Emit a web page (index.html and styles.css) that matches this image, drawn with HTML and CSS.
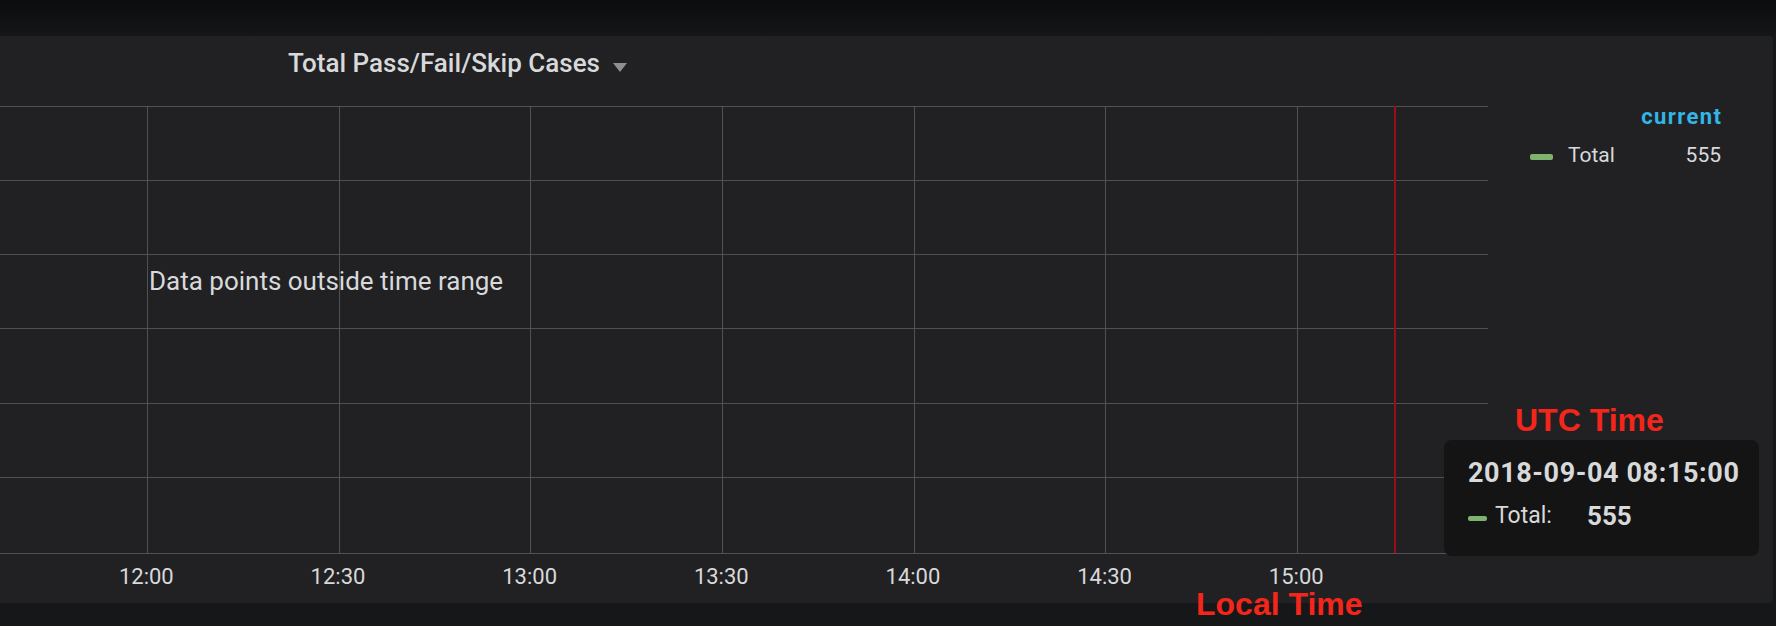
FILE: index.html
```html
<!DOCTYPE html>
<html lang="en">
<head>
    <meta charset="UTF-8">
    <title>Total Pass/Fail/Skip Cases</title>
    <link rel="stylesheet" href="styles.css">
</head>
<body>
    <div class="topbar"></div>
    <div class="panel">
        <div class="panel-header">
            <span class="panel-title">Total Pass/Fail/Skip Cases</span>
            <span class="caret"></span>
        </div>
        <div class="panel-body">
            <div class="graph">
                <div class="plot">
                    <svg class="grid" width="1488" height="448" viewBox="0 0 1488 448">
                        <g fill="#515154">
                            <rect x="0" y="0" width="1488" height="1"/>
                            <rect x="0" y="74" width="1488" height="1"/>
                            <rect x="0" y="148" width="1488" height="1"/>
                            <rect x="0" y="222" width="1488" height="1"/>
                            <rect x="0" y="297" width="1488" height="1"/>
                            <rect x="0" y="371" width="1488" height="1"/>
                            <rect x="0" y="447" width="1488" height="1"/>
                            <rect x="147" y="0" width="1" height="448"/>
                            <rect x="339" y="0" width="1" height="448"/>
                            <rect x="530" y="0" width="1" height="448"/>
                            <rect x="722" y="0" width="1" height="448"/>
                            <rect x="914" y="0" width="1" height="448"/>
                            <rect x="1105" y="0" width="1" height="448"/>
                            <rect x="1297" y="0" width="1" height="448"/>
                        </g>
                        <!-- hover marker -->
                        <rect x="1394" y="0" width="2" height="447" fill="#9a0e17"/>
                    </svg>
                    <div class="no-data">Data points outside time range</div>
                </div>
                <div class="x-axis">
                    <span>12:00</span>
                    <span>12:30</span>
                    <span>13:00</span>
                    <span>13:30</span>
                    <span>14:00</span>
                    <span>14:30</span>
                    <span>15:00</span>
                </div>
            </div>
            <div class="legend">
                <div class="legend-head">current</div>
                <div class="legend-row">
                    <i class="swatch"></i>
                    <span class="legend-name">Total</span>
                    <span class="legend-value">555</span>
                </div>
            </div>
        </div>

        <div class="tooltip">
            <div class="tooltip-time">2018-09-04 08:15:00</div>
            <div class="tooltip-row">
                <i class="tooltip-swatch"></i>
                <span class="tooltip-name">Total:</span>
                <span class="tooltip-value">555</span>
            </div>
        </div>

        <div class="note note-utc">UTC Time</div>
        <div class="note note-local">Local Time</div>
    </div>
</body>
</html>
```

FILE: styles.css
```css
body {
    margin: 0;
    height: 626px;
    overflow: hidden;
    background-color: #161719;
    font-family: Roboto, "Liberation Sans", sans-serif;
    color: #d8d9da;
}

.topbar {
    height: 36px;
    background: linear-gradient(to bottom, #0b0c0e, #151618);
}

.panel {
    position: relative;
    height: 567px;
    margin-right: 3px;
    background-color: #212124;
    border-radius: 0 4px 4px 0;
}

.panel-header {
    box-sizing: border-box;
    height: 70px;
    padding: 12px 0 0 288px;
    display: flex;
    align-items: flex-start;
}

.panel-title {
    font-size: 26px;
    font-weight: 500;
    line-height: 30px;
    color: #d8d9da;
}

.caret {
    width: 0;
    height: 0;
    margin: 15px 0 0 13px;
    border-left: 7px solid transparent;
    border-right: 7px solid transparent;
    border-top: 9px solid #8e8e90;
}

.panel-body {
    display: flex;
}

.graph {
    width: 1488px;
    flex-shrink: 0;
}

.plot {
    position: relative;
    height: 448px;
}

.grid {
    display: block;
    shape-rendering: crispEdges;
}

.no-data {
    position: absolute;
    left: 149px;
    top: 162px;
    font-size: 26px;
    line-height: 26px;
    color: #d8d9da;
}

.x-axis {
    display: grid;
    grid-template-columns: repeat(7, 191.67px);
    padding-left: 50.5px;
    margin-top: 10px;
    font-size: 22px;
    line-height: 26px;
    color: #d8d9da;
}

.x-axis span {
    text-align: center;
}

.legend {
    flex: 1;
    margin-top: -2px;
    padding: 0 52px 0 42px;
}

.legend-head {
    text-align: right;
    font-size: 22px;
    font-weight: 700;
    line-height: 26px;
    letter-spacing: 1.4px;
    margin-right: -1.4px;
    color: #33b5e5;
}

.legend-row {
    display: flex;
    align-items: center;
    margin-top: 12px;
    font-size: 21px;
    line-height: 26px;
}

.swatch {
    width: 23px;
    height: 6px;
    margin: 3px 15px 0 0;
    border-radius: 2px;
    background-color: #7eb26d;
}

.legend-name {
    flex: 1;
}

.legend-value {
    text-align: right;
}

/* hover tooltip */
.tooltip {
    position: absolute;
    left: 1444px;
    top: 404px;
    box-sizing: border-box;
    width: 315px;
    height: 116px;
    padding: 17px 0 0 24px;
    background-color: #141414;
    border-radius: 8px;
}

.tooltip-time {
    font-size: 27px;
    font-weight: 700;
    line-height: 32px;
    letter-spacing: 0.6px;
}

.tooltip-row {
    display: flex;
    align-items: center;
    margin-top: 12px;
    line-height: 30px;
}

.tooltip-swatch {
    width: 19px;
    height: 5px;
    margin: 4px 8px 0 0;
    border-radius: 2px;
    background-color: #7eb26d;
}

.tooltip-name {
    min-width: 92px;
    font-size: 23px;
}

.tooltip-value {
    font-size: 26px;
    font-weight: 700;
}

/* red markup notes */
.note {
    position: absolute;
    font-family: "Liberation Sans", Arial, sans-serif;
    font-size: 32px;
    font-weight: 700;
    line-height: 32px;
    color: #f4261b;
    white-space: nowrap;
}

.note-utc {
    left: 1515px;
    top: 368px;
}

.note-local {
    left: 1196px;
    top: 552px;
}
```
